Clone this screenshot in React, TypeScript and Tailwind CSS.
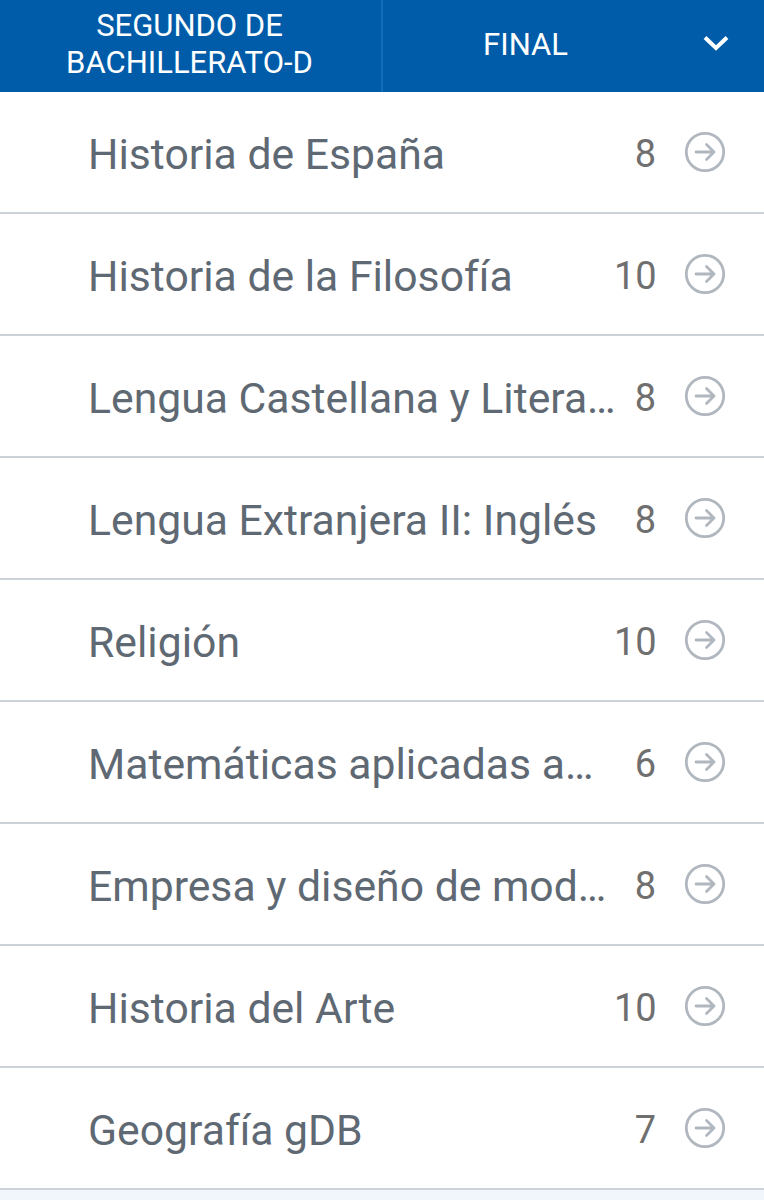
const subjects = [
  { name: "Historia de España", grade: 8 },
  { name: "Historia de la Filosofía", grade: 10 },
  { name: "Lengua Castellana y Litera…", grade: 8 },
  { name: "Lengua Extranjera II: Inglés", grade: 8 },
  { name: "Religión", grade: 10 },
  { name: "Matemáticas aplicadas a…", grade: 6 },
  { name: "Empresa y diseño de mod…", grade: 8 },
  { name: "Historia del Arte", grade: 10 },
  { name: "Geografía gDB", grade: 7 },
]

const ArrowCircle = () => (
  <svg width="42" height="42" viewBox="0 0 42 42" fill="none" className="shrink-0 mt-[-1px]">
    <circle cx="21" cy="21" r="18.7" stroke="#b0b7be" strokeWidth="2.8" />
    <path d="M12 21H30M22.5 13.5L30 21l-7.5 7.5" stroke="#b0b7be" strokeWidth="2.8" strokeLinecap="round" strokeLinejoin="round" />
  </svg>
)

export default function App() {
  return (
    <div className="w-[764px] h-[1200px] overflow-hidden bg-white font-['Roboto',sans-serif]">
      <header className="flex h-[92px] pb-[4px] bg-[#005ca9] text-white text-[31px] leading-[37px]">
        <div className="w-[383px] shrink-0 flex items-center justify-center text-center border-r-2 border-[#0f6dba] mb-[-4px] pb-[4px] pr-[2px]">
          <span>SEGUNDO DE<br />BACHILLERATO-D</span>
        </div>
        <div className="flex-1 flex items-center justify-center">FINAL</div>
        <div className="w-[96px] shrink-0 flex items-center justify-center pb-[2px]">
          <svg width="26" height="16" viewBox="0 0 26 16" fill="none">
            <path d="M2 2.5l11 10.5L24 2.5" stroke="#fff" strokeWidth="4" />
          </svg>
        </div>
      </header>
      <ul>
        {subjects.map(s => (
          <li key={s.name} className="flex items-center h-[122px] pl-[88px] pr-[38px] border-b-2 border-[#ccd2d7]">
            <span className="flex-1 min-w-0 whitespace-nowrap text-[42.7px] text-[#5f6973] pt-[5px]">{s.name}</span>
            <span className="shrink-0 w-[42px] text-right text-[38px] text-[#6f6f6f] pt-[5px]">{s.grade}</span>
            <span className="w-[28px] shrink-0" />
            <ArrowCircle />
          </li>
        ))}
      </ul>
      <div className="h-[10px] bg-[#f0f6fb]" />
    </div>
  )
}
